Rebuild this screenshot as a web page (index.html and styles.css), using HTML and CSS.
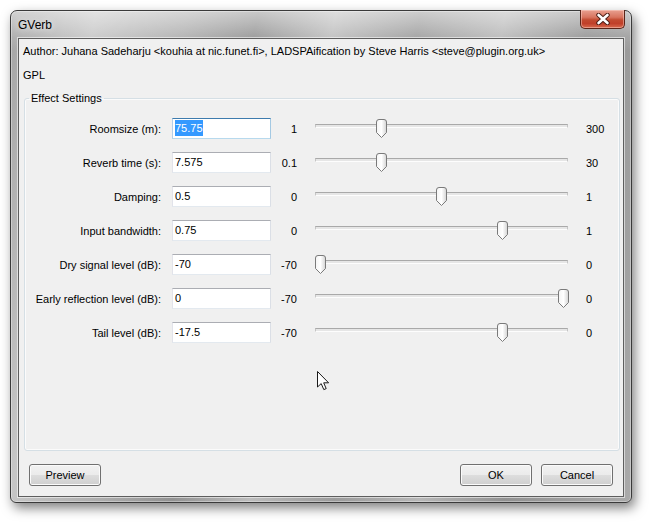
FILE: index.html
```html
<!DOCTYPE html>
<html>
<head>
<meta charset="utf-8">
<title>GVerb</title>
<link rel="stylesheet" href="styles.css">
</head>
<body>
<div class="window">
  <div class="titlebar">
    <span class="title">GVerb</span>
    <div class="close">
      <svg width="16" height="12" viewBox="0 0 16 12">
        <path d="M3.5 2 L12.5 10 M12.5 2 L3.5 10" fill="none" stroke="#4a1c14" stroke-width="4.4" stroke-linecap="round"/>
        <path d="M3.5 2 L12.5 10 M12.5 2 L3.5 10" fill="none" stroke="#ffffff" stroke-width="2.6" stroke-linecap="round"/>
      </svg>
    </div>
  </div>
  <div class="client">
    <div class="info">Author: Juhana Sadeharju &lt;kouhia at nic.funet.fi&gt;, LADSPAification by Steve Harris &lt;steve@plugin.org.uk&gt;</div>
    <div class="info gpl">GPL</div>
    <fieldset class="group">
      <legend>Effect Settings</legend>
      <div class="grid">
        <div class="lbl">Roomsize (m):</div>
        <div class="field focus"><span class="sel">75.75</span></div>
        <div class="min">1</div>
        <div class="slider"><div class="track"></div><svg class="thumb" style="left:61px" width="11" height="19" viewBox="0 0 11 19"><use href="#thumb"/></svg></div>
        <div class="max">300</div>

        <div class="lbl">Reverb time (s):</div>
        <div class="field">7.575</div>
        <div class="min">0.1</div>
        <div class="slider"><div class="track"></div><svg class="thumb" style="left:61px" width="11" height="19" viewBox="0 0 11 19"><use href="#thumb"/></svg></div>
        <div class="max">30</div>

        <div class="lbl">Damping:</div>
        <div class="field">0.5</div>
        <div class="min">0</div>
        <div class="slider"><div class="track"></div><svg class="thumb" style="left:121px" width="11" height="19" viewBox="0 0 11 19"><use href="#thumb"/></svg></div>
        <div class="max">1</div>

        <div class="lbl">Input bandwidth:</div>
        <div class="field">0.75</div>
        <div class="min">0</div>
        <div class="slider"><div class="track"></div><svg class="thumb" style="left:182px" width="11" height="19" viewBox="0 0 11 19"><use href="#thumb"/></svg></div>
        <div class="max">1</div>

        <div class="lbl">Dry signal level (dB):</div>
        <div class="field">-70</div>
        <div class="min">-70</div>
        <div class="slider"><div class="track"></div><svg class="thumb" style="left:0px" width="11" height="19" viewBox="0 0 11 19"><use href="#thumb"/></svg></div>
        <div class="max">0</div>

        <div class="lbl">Early reflection level (dB):</div>
        <div class="field">0</div>
        <div class="min">-70</div>
        <div class="slider"><div class="track"></div><svg class="thumb" style="left:243px" width="11" height="19" viewBox="0 0 11 19"><use href="#thumb"/></svg></div>
        <div class="max">0</div>

        <div class="lbl">Tail level (dB):</div>
        <div class="field">-17.5</div>
        <div class="min">-70</div>
        <div class="slider"><div class="track"></div><svg class="thumb" style="left:182px" width="11" height="19" viewBox="0 0 11 19"><use href="#thumb"/></svg></div>
        <div class="max">0</div>
      </div>
    </fieldset>
    <div class="buttons">
      <div class="btn">Preview</div>
      <div class="spacer"></div>
      <div class="btn">OK</div>
      <div class="btn">Cancel</div>
    </div>
  </div>
  <svg class="cursor" width="13" height="20" viewBox="0 0 13 20">
    <path d="M0.5 0.5 L0.5 16 L4.2 12.6 L6.8 18.6 L9.2 17.6 L6.7 11.8 L11.6 11.8 Z" fill="#ffffff" stroke="#1a1a1a" stroke-width="1" stroke-linejoin="miter"/>
  </svg>
</div>
<svg width="0" height="0" class="defs">
  <defs>
    <linearGradient id="tg" x1="0" y1="0" x2="1" y2="0">
      <stop offset="0" stop-color="#f4f4f4"/>
      <stop offset="0.5" stop-color="#ffffff"/>
      <stop offset="1" stop-color="#d4d4d4"/>
    </linearGradient>
    <g id="thumb">
      <path d="M0.5 3 Q0.5 0.5 3 0.5 L8 0.5 Q10.5 0.5 10.5 3 L10.5 13.5 L5.5 18.5 L0.5 13.5 Z" fill="url(#tg)" stroke="#7a7a7a" stroke-width="1"/>
    </g>
  </defs>
</svg>
</body>
</html>
```

FILE: styles.css
```css
html, body {
  margin: 0;
  padding: 0;
  background: #ffffff;
}
body {
  width: 650px;
  height: 523px;
  overflow: hidden;
  font-family: "Liberation Sans", Arial, sans-serif;
  font-size: 11px;
  color: #000;
}
.defs {
  position: absolute;
}
.window {
  position: relative;
  box-sizing: border-box;
  width: 622px;
  height: 493px;
  margin: 10px 0 0 10px;
  border: 1px solid #3a3a3a;
  border-radius: 7px 7px 6px 6px;
  background:
    linear-gradient(180deg, rgba(255,255,255,0.5) 0px, rgba(255,255,255,0.12) 26px, rgba(255,255,255,0) 40px),
    linear-gradient(100deg, #a4a4a4 0%, #c6c6c6 12%, #adadad 25%, #939393 35%, #bdbdbd 46%, #9c9c9c 58%, #b8b8b8 70%, #929292 82%, #aaaaaa 100%);
  box-shadow: 0 0 0 1px rgba(255,255,255,0.35) inset, 3px 5px 12px rgba(0,0,0,0.5);
  display: flex;
  flex-direction: column;
}
.titlebar {
  height: 27px;
  display: flex;
  align-items: flex-start;
  flex-shrink: 0;
}
.title {
  font-size: 12px;
  margin: 7px 0 0 7px;
  color: #000;
  text-shadow: 0 0 6px rgba(255,255,255,0.9);
}
.close {
  margin-left: auto;
  margin-right: 6px;
  margin-top: -1px;
  width: 45px;
  height: 19px;
  box-sizing: border-box;
  border: 1px solid #5a2418;
  border-top: none;
  border-radius: 0 0 5px 5px;
  background: linear-gradient(180deg, #e8a090 0%, #d87560 40%, #c24a30 55%, #c0402a 75%, #d86a4e 100%);
  box-shadow: inset 0 0 0 1px rgba(255,220,210,0.45);
  display: flex;
  align-items: center;
  justify-content: center;
}
.client {
  flex: 1;
  margin: 0 7px 5px 7px;
  box-sizing: border-box;
  border: 1px solid #5e5e5e;
  box-shadow: 0 0 0 1px rgba(255,255,255,0.55);
  background: #f0f0f0;
  display: flex;
  flex-direction: column;
  padding: 5px 0 0 0;
}
.info {
  height: 14px;
  line-height: 14px;
  padding-left: 4px;
  white-space: nowrap;
}
.gpl {
  margin-top: 10px;
}
.group {
  flex: 1;
  margin: 9px 3px 0 5px;
  padding: 13px 0 0 0;
  border: 1px solid #d5dfe5;
  border-radius: 3px;
  box-shadow: inset 0 0 0 1px #fbfbfb;
  min-width: 0;
}
.group legend {
  margin-left: 4px;
  padding: 0 2px;
  height: 14px;
  line-height: 14px;
}
.grid {
  display: grid;
  grid-template-columns: 147px 99px 26px 289px 1fr;
  grid-auto-rows: 21px;
  row-gap: 13px;
  align-items: center;
}
.lbl {
  text-align: right;
  margin-right: 11px;
  white-space: nowrap;
}
.field {
  width: 99px;
  height: 21px;
  box-sizing: border-box;
  border: 1px solid;
  border-color: #abadb3 #dbdfe6 #e3e9ef #e2e3ea;
  background: #fff;
  padding: 0 0 0 2px;
  line-height: 19px;
  white-space: nowrap;
}
.field.focus {
  border-color: #3d7bad #a4c9e3 #b7d9ed #b5cfe7;
}
.sel {
  background: #3399ff;
  color: #fff;
  padding: 2px 0 2px 0;
}
.min {
  text-align: right;
}
.slider {
  position: relative;
  height: 21px;
  margin: 0 18px;
}
.track {
  position: absolute;
  left: 0;
  right: 0;
  top: 6px;
  height: 2px;
  background: #e6e6e6;
  border-top: 1px solid #a9a9a9;
  border-bottom: 1px solid #fdfdfd;
  border-left: 1px solid #c4c4c4;
  border-right: 1px solid #c4c4c4;
}
.thumb {
  position: absolute;
  top: 1px;
  display: block;
}
.max {
  text-align: left;
}
.buttons {
  display: flex;
  gap: 9px;
  padding: 13px 10px 10px 10px;
  flex-shrink: 0;
}
.spacer {
  flex: 1;
}
.btn {
  width: 72px;
  height: 22px;
  box-sizing: border-box;
  border: 1px solid #707070;
  border-radius: 3px;
  background: linear-gradient(180deg, #f2f2f2 0%, #ebebeb 50%, #dddddd 51%, #cfcfcf 100%);
  box-shadow: inset 0 0 0 1px #fbfbfb;
  text-align: center;
  line-height: 20px;
}
.cursor {
  position: absolute;
  left: 306px;
  top: 360px;
}
```
